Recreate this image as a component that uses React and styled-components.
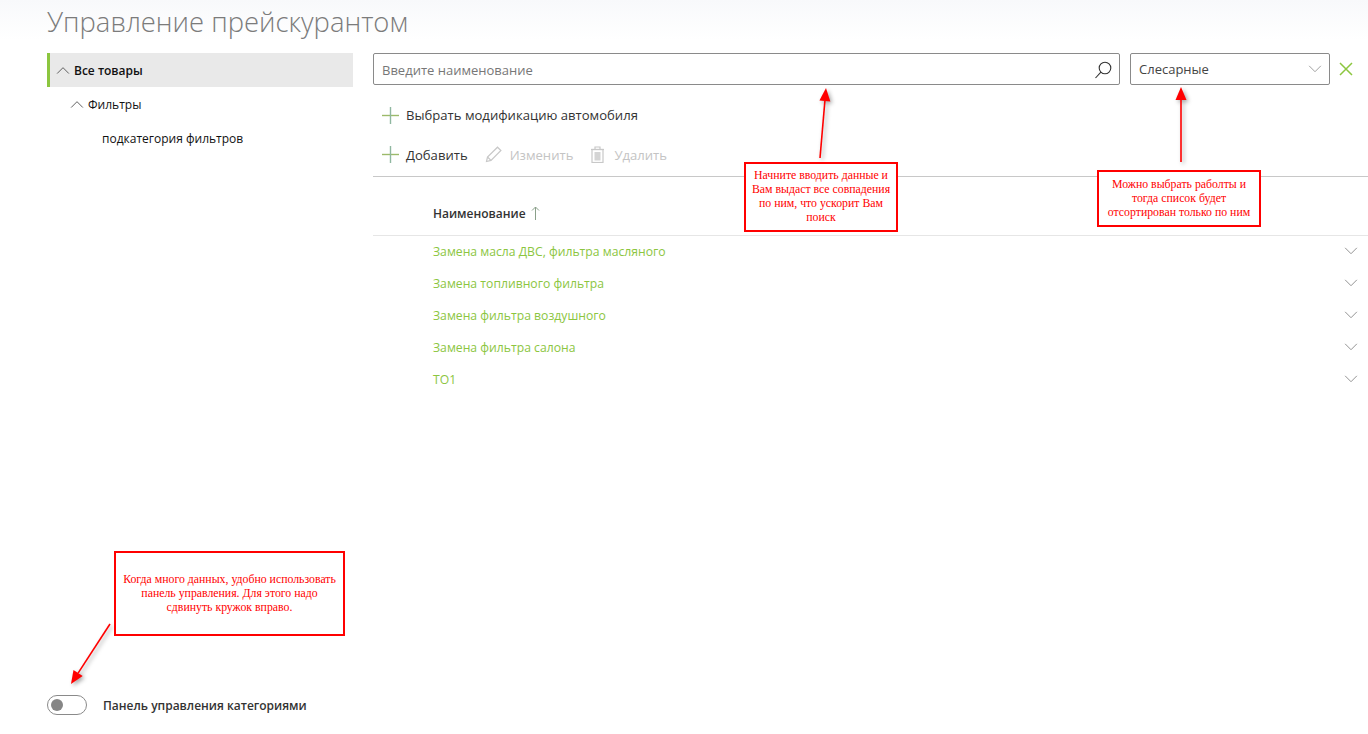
import styled, { createGlobalStyle } from "styled-components";

const GREEN = "#8cc63f";

const GlobalStyle = createGlobalStyle`
  html, body {
    margin: 0;
    padding: 0;
    background: #fff;
  }
  body {
    font-family: "Open Sans", "Noto Sans", sans-serif;
    color: #222;
  }
`;

const Page = styled.div`
  position: relative;
  height: 734px;
  overflow: hidden;
  display: flex;
  flex-direction: column;
  background: linear-gradient(#f8f9fb, #fff 40px);
`;

const Title = styled.h1`
  margin: 0;
  padding: 4px 0 0 47px;
  height: 47px;
  box-sizing: border-box;
  font-size: 27.4px;
  line-height: 36px;
  font-weight: 300;
  color: #7b7b7b;
`;

const Columns = styled.div`
  flex: 1;
  display: flex;
  padding-top: 6px;
  min-height: 0;
`;

// ------------------------------------------- sidebar

const Sidebar = styled.aside`
  width: 306px;
  margin-left: 47px;
  margin-right: 20px;
  flex-shrink: 0;
  display: flex;
  flex-direction: column;
`;

const TreeRow = styled.div`
  height: 34px;
  box-sizing: border-box;
  display: flex;
  align-items: center;
  gap: 4px;
  padding-left: ${(p) => p.$indent}px;
  font-size: 12px;
  font-weight: ${(p) => (p.$active ? 600 : 400)};
  color: #111;
  background: ${(p) => (p.$active ? "#e9e9e9" : "transparent")};
  border-left: 3px solid ${(p) => (p.$active ? GREEN : "transparent")};
`;

const SwitchRow = styled.label`
  margin-top: auto;
  margin-bottom: 19px;
  display: flex;
  align-items: center;
  gap: 16px;
  font-size: 12px;
  font-weight: 600;
  color: #333;
`;

const SwitchTrack = styled.span`
  width: 35px;
  height: 18px;
  border: 1px solid #8a8a8a;
  border-radius: 10px;
  display: flex;
  align-items: center;
  padding-left: 3px;
`;

const SwitchKnob = styled.span`
  width: 12px;
  height: 12px;
  border-radius: 50%;
  background: #868686;
`;

// ------------------------------------------- main

const Main = styled.main`
  flex: 1;
  min-width: 0;
  display: flex;
  flex-direction: column;
`;

const FilterBar = styled.div`
  display: flex;
  align-items: center;
  height: 32px;
`;

const SearchBox = styled.div`
  width: 747px;
  height: 32px;
  box-sizing: border-box;
  border: 1px solid #8a8a8a;
  border-radius: 2px;
  display: flex;
  align-items: center;
  justify-content: space-between;
  padding: 1px 5px 0 8px;
  font-size: 13px;
  color: #777;
  background: #fff;
`;

const SelectBox = styled.div`
  width: 200px;
  height: 32px;
  box-sizing: border-box;
  margin-left: 10px;
  border: 1px solid #8a8a8a;
  border-radius: 2px;
  display: flex;
  align-items: center;
  justify-content: space-between;
  padding: 0 7px 0 8px;
  font-size: 13px;
  color: #444;
  background: #fff;
`;

const ClearButton = styled.span`
  display: flex;
  margin-left: 9px;
`;

const ActionRow = styled.div`
  display: flex;
  align-items: center;
  height: 40px;
  padding-left: 9px;
  margin-top: ${(p) => p.$top || 0}px;
`;

const Action = styled.span`
  display: flex;
  align-items: center;
  gap: ${(p) => p.$gap || 7}px;
  margin-right: ${(p) => p.$after || 17}px;
  font-size: 13.1px;
  color: ${(p) => (p.$disabled ? "#c4c4c4" : "#333")};
`;

const Toolbar = styled(ActionRow)`
  border-bottom: 1px solid #c8c8c8;
  height: 42px;
  box-sizing: border-box;
  padding-bottom: 2px;
`;

const TableHead = styled.div`
  height: 59px;
  box-sizing: border-box;
  display: flex;
  align-items: center;
  gap: 5px;
  padding: 14px 0 0 60px;
  font-size: 12px;
  font-weight: 600;
  color: #333;
  border-bottom: 1px solid #e6e6e6;
`;

const Row = styled.div`
  height: 32px;
  box-sizing: border-box;
  display: flex;
  align-items: center;
  justify-content: space-between;
  padding: 0 10px 2px 60px;
  font-size: 12.2px;
  color: ${GREEN};
`;

// ------------------------------------------- annotations over the page

const Note = styled.div`
  position: absolute;
  left: ${(p) => p.$x}px;
  top: ${(p) => p.$y}px;
  width: ${(p) => p.$w}px;
  height: ${(p) => p.$h}px;
  box-sizing: border-box;
  border: 2px solid #f00;
  background: #fff;
  display: flex;
  align-items: center;
  justify-content: center;
  text-align: center;
  padding: 0 4px 2px;
  font-family: "Liberation Serif", "Times New Roman", serif;
  font-size: 11.8px;
  line-height: 14px;
  color: #f00;
`;

const ArrowLayer = styled.svg`
  position: absolute;
  left: 0;
  top: 0;
  pointer-events: none;
  filter: drop-shadow(2px 2px 2px rgba(0, 0, 0, 0.35));
`;

function Chevron({ up, size = 14, color = "#8a8a8a" }) {
  return (
    <svg width={size} height={size * 0.6} viewBox="0 0 16 10" fill="none">
      <polyline
        points={up ? "1,9 8,2 15,9" : "1,1 8,8 15,1"}
        stroke={color}
        strokeWidth="1.1"
      />
    </svg>
  );
}

function Plus() {
  return (
    <svg width="17" height="17" viewBox="0 0 17 17">
      <path d="M0 8.5H17" stroke="#9cba6a" strokeWidth="1.4" />
      <path d="M8.5 0V17" stroke="#8fb7a0" strokeWidth="1.4" />
    </svg>
  );
}

function PencilIcon() {
  return (
    <svg width="17" height="17" viewBox="0 0 17 17" fill="none" stroke="#c8c8c8" strokeWidth="1.2">
      <path d="M1.5 15.5l1-4.5L12.5 1.2l3.4 3.3L6 14.4z" />
      <path d="M2.5 11l3.5 3.4" />
    </svg>
  );
}

function TrashIcon() {
  return (
    <svg width="15" height="17" viewBox="0 0 15 17" fill="none" stroke="#c8c8c8" strokeWidth="1.2">
      <path d="M1 3.5h13" />
      <path d="M5 3.5V1h5v2.5" />
      <rect x="2" y="3.5" width="11" height="13" />
      <rect x="4.5" y="6" width="6" height="8.5" fill="#d4d4d4" stroke="none" />
    </svg>
  );
}

function SearchIcon() {
  return (
    <svg width="20" height="20" viewBox="0 0 20 20" fill="none" stroke="#333" strokeWidth="1.1">
      <circle cx="11" cy="8" r="5.8" />
      <path d="M6.9 12.1L1.5 18" />
    </svg>
  );
}

function CloseIcon() {
  return (
    <svg width="14" height="14" viewBox="0 0 14 14" fill="none" stroke={GREEN} strokeWidth="1.5">
      <path d="M1 1L13 13M13 1L1 13" />
    </svg>
  );
}

function Arrow({ x1, y1, x2, y2 }) {
  const a = Math.atan2(y2 - y1, x2 - x1);
  const len = 13;
  const half = 5.5;
  const bx = x2 - Math.cos(a) * len;
  const by = y2 - Math.sin(a) * len;
  const p1 = `${bx - Math.sin(a) * half},${by + Math.cos(a) * half}`;
  const p2 = `${bx + Math.sin(a) * half},${by - Math.cos(a) * half}`;
  return (
    <>
      <line x1={x1} y1={y1} x2={bx} y2={by} stroke="#f00" strokeWidth="1.6" />
      <polygon points={`${x2},${y2} ${p1} ${p2}`} fill="#f00" />
    </>
  );
}

const works = [
  "Замена масла ДВС, фильтра масляного",
  "Замена топливного фильтра",
  "Замена фильтра воздушного",
  "Замена фильтра салона",
  "ТО1",
];

export default function App() {
  return (
    <>
      <GlobalStyle />
      <Page>
        <Title>Управление прейскурантом</Title>
        <Columns>
          <Sidebar>
            <TreeRow $active $indent={6}>
              <Chevron up color="#555" />
              Все товары
            </TreeRow>
            <TreeRow $indent={20}>
              <Chevron up color="#555" />
              Фильтры
            </TreeRow>
            <TreeRow $indent={52}>подкатегория фильтров</TreeRow>
            <SwitchRow>
              <SwitchTrack>
                <SwitchKnob />
              </SwitchTrack>
              Панель управления категориями
            </SwitchRow>
          </Sidebar>

          <Main>
            <FilterBar>
              <SearchBox>
                Введите наименование
                <SearchIcon />
              </SearchBox>
              <SelectBox>
                Слесарные
                <Chevron color="#999" />
              </SelectBox>
              <ClearButton>
                <CloseIcon />
              </ClearButton>
            </FilterBar>
            <ActionRow $top={10}>
              <Action>
                <Plus />
                Выбрать модификацию автомобиля
              </Action>
            </ActionRow>
            <Toolbar>
              <Action>
                <Plus />
                Добавить
              </Action>
              <Action $disabled $gap={8}>
                <PencilIcon />
                Изменить
              </Action>
              <Action $disabled $gap={9}>
                <TrashIcon />
                Удалить
              </Action>
            </Toolbar>
            <TableHead>
              Наименование
              <svg width="9" height="14" viewBox="0 0 9 14" fill="none" stroke="#8aa08a" strokeWidth="1">
                <path d="M4.5 14V1M1 4.5L4.5 1L8 4.5" />
              </svg>
            </TableHead>
            {works.map((work) => (
              <Row key={work}>
                {work}
                <Chevron />
              </Row>
            ))}
          </Main>
        </Columns>

        <ArrowLayer width="1368" height="734">
          <Arrow x1={820} y1={158} x2={826} y2={88} />
          <Arrow x1={1181} y1={162} x2={1181} y2={87} />
          <Arrow x1={110} y1={624} x2={71} y2={684} />
        </ArrowLayer>
        <Note $x={744} $y={162} $w={154} $h={70}>
          Начните вводить данные и Вам выдаст все совпадения по ним, что ускорит Вам поиск
        </Note>
        <Note $x={1097} $y={170} $w={164} $h={57}>
          Можно выбрать раболты и тогда список будет отсортирован только по ним
        </Note>
        <Note $x={114} $y={551} $w={231} $h={85}>
          Когда много данных, удобно использовать панель управления. Для этого надо сдвинуть кружок вправо.
        </Note>
      </Page>
    </>
  );
}
